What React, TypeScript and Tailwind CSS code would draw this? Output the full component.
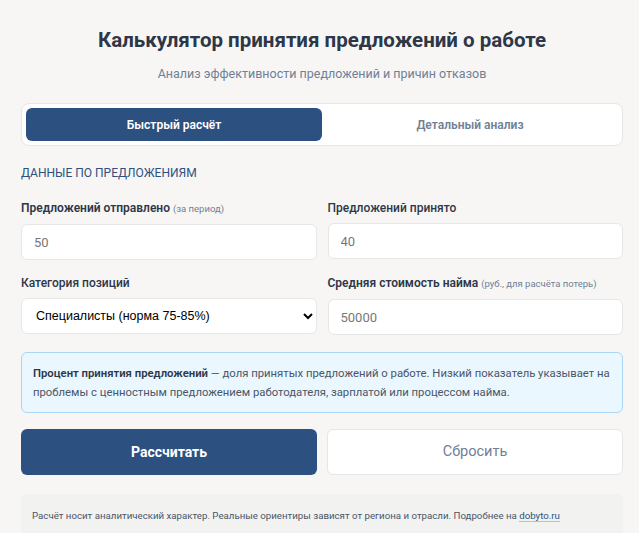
import { useState } from "react";

const body = { fontFamily: 'Roboto, "Noto Sans", sans-serif' };

export default function App() {
  const [tab, setTab] = useState("quick");
  const [sent, setSent] = useState("50");
  const [accepted, setAccepted] = useState("40");
  const [cost, setCost] = useState("50000");

  return (
    <div className="min-h-[533px] bg-[#f7f6f4] pl-[21px] pr-[16px] pt-[26px] text-[#2d3748] font-['Roboto',sans-serif]">
      <h1 className="text-center text-[20.5px] font-bold leading-[28px] text-[#2d3748]">Калькулятор принятия предложений о работе</h1>
      <p className="mt-[11px] text-center text-[12.5px] leading-[18px] text-[#718096]">Анализ эффективности предложений и причин отказов</p>

      <div className="mt-[20px] flex rounded-[8px] border border-[#e6e6e6] bg-white p-[4px]">
        <button onClick={() => setTab("quick")} className={`h-[33px] flex-1 rounded-[6px] text-[12px] font-semibold font-['Roboto',sans-serif] ${tab === "quick" ? "bg-[#2c5180] text-white" : "text-[#718096]"}`}>Быстрый расчёт</button>
        <button onClick={() => setTab("detail")} className={`h-[33px] flex-1 rounded-[6px] text-[12px] font-semibold font-['Roboto',sans-serif] ${tab === "detail" ? "bg-[#2c5180] text-white" : "text-[#718096]"}`}>Детальный анализ</button>
      </div>

      <div className="mt-[19px] text-[12px] uppercase leading-[16px] text-[#2c5180]">Данные по предложениям</div>

      <div className="mt-[18px] grid grid-cols-2 gap-x-[11px]">
        <div>
          <label className="block text-[12px] font-semibold leading-[18px]">Предложений отправлено <span className="text-[9.5px] font-normal text-[#718096]">(за период)</span></label>
          <input value={sent} onChange={(e) => setSent(e.target.value)} style={body} className="mt-[6px] h-[36px] w-full rounded-[6px] border border-[#e6e6e6] bg-white px-[12px] text-[13px] text-[#777] outline-none" />
        </div>
        <div>
          <label className="block text-[12px] font-medium leading-[18px]">Предложений принято</label>
          <input value={accepted} onChange={(e) => setAccepted(e.target.value)} style={body} className="mt-[6px] h-[36px] w-full rounded-[6px] border border-[#e6e6e6] bg-white px-[12px] text-[13px] text-[#777] outline-none" />
        </div>
        <div className="mt-[14px]">
          <label className="block text-[12px] font-medium leading-[18px]">Категория позиций</label>
          <select className="mt-[6px] h-[36px] w-full rounded-[6px] border border-[#e6e6e6] bg-white px-[10px] text-[12.5px] text-black font-['Liberation_Sans',Arial,sans-serif]">
            <option>Специалисты (норма 75-85%)</option>
            <option>Руководители (норма 65-75%)</option>
          </select>
        </div>
        <div className="mt-[14px]">
          <label className="block whitespace-nowrap text-[12px] font-semibold leading-[18px]">Средняя стоимость найма <span className="text-[9.5px] font-normal text-[#718096]">(руб., для расчёта потерь)</span></label>
          <input value={cost} onChange={(e) => setCost(e.target.value)} style={body} className="mt-[6px] h-[36px] w-full rounded-[6px] border border-[#e6e6e6] bg-white px-[12px] text-[13px] text-[#777] outline-none" />
        </div>
      </div>

      <div className="mt-[17px] rounded-[6px] border border-[#a9d6f5] bg-[#ebf7fe] px-[11px] pt-[11px] pb-[10px] text-[11.3px] leading-[19px] text-[#4a5568]">
        <b className="font-semibold text-[#2d3748]">Процент принятия предложений</b> — доля принятых предложений о работе. Низкий показатель указывает на проблемы с ценностным предложением работодателя, зарплатой или процессом найма.
      </div>

      <div className="mt-[16px] grid grid-cols-2 gap-x-[10px]">
        <button className="h-[46px] rounded-[6px] bg-[#2c5180] text-[14px] font-bold text-white font-['Roboto',sans-serif]">Рассчитать</button>
        <button className="h-[46px] rounded-[6px] border border-[#e6e6e6] bg-white text-[14.5px] text-[#718096] font-['Roboto',sans-serif]">Сбросить</button>
      </div>

      <div className="mt-[19px] rounded-t-[6px] bg-[#f2f2f0] px-[11px] pt-[14px] pb-[12px] text-[9.7px] leading-[16px] text-[#4a5568]">
        Расчёт носит аналитический характер. Реальные ориентиры зависят от региона и отрасли. Подробнее на <a href="#" className="border-b border-[#90cdf4] text-[#2c5180]">dobyto.ru</a>
      </div>
    </div>
  );
}
